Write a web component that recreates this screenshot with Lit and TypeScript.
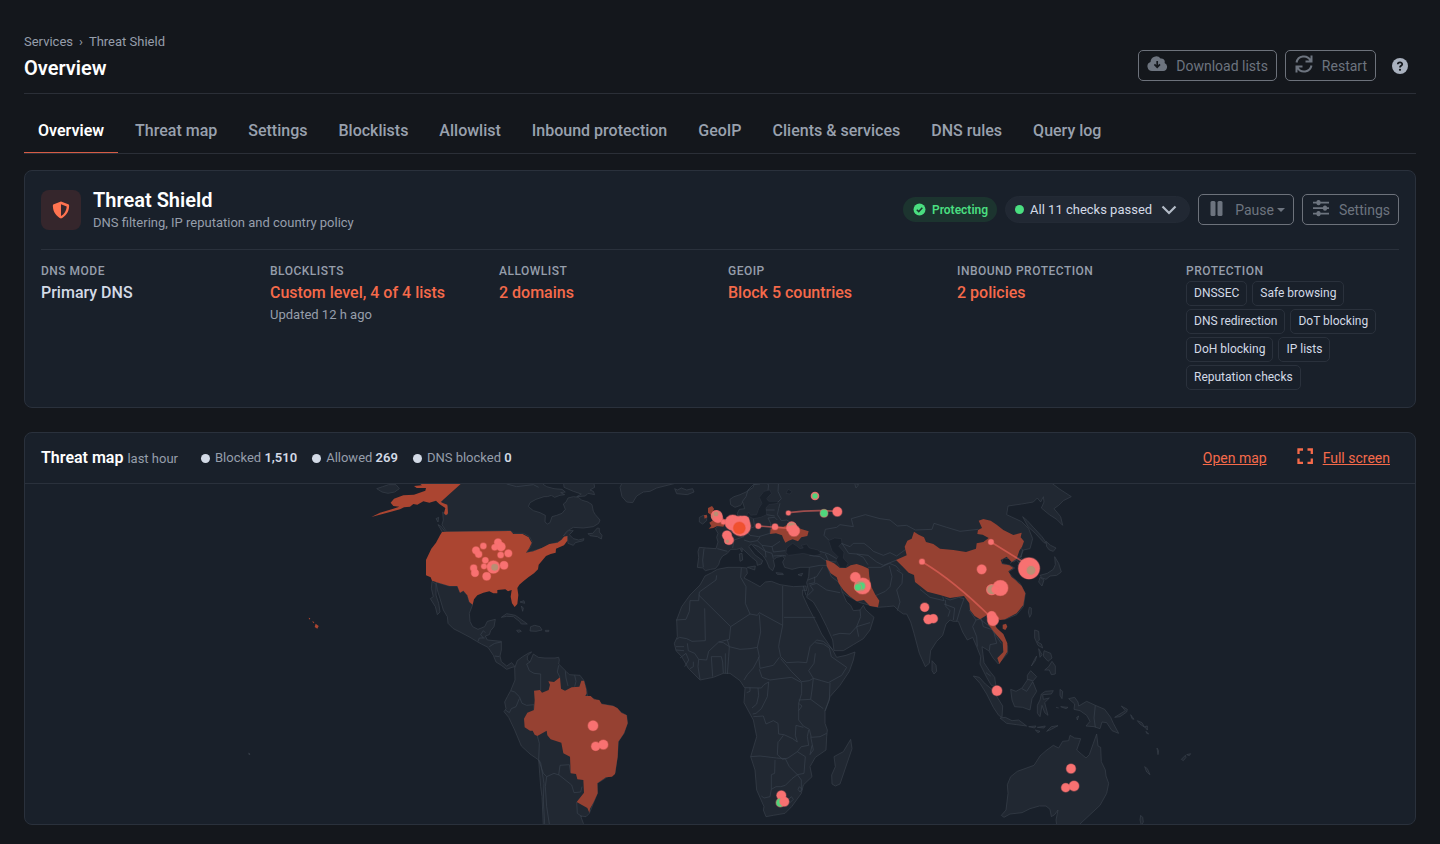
import { LitElement, html, svg, css } from "lit";
import { customElement } from "lit/decorators.js";

type Dot = [number, number, number, string?];

interface Region {
  x: number;
  y: number;
  land?: string[];
  sea?: string[];
  borders?: string[];
  hot?: string[];
  warm?: string[];
  arcs?: string[];
  dots?: Dot[];
}

const americas: Region = {
  x: 0,
  y: 0,
  land: [
    "M302,0L242,66 250,72 262,78 263,104 256,104 248,96 250,120 246,134 256,150 262,156 450,152 462,160 490,160 508,170 516,184 512,200 500,218 522,212 550,204 570,194 592,187 603,182 612,172 622,168 624,190 640,196 646,188 670,182 672,176 656,180 640,176 628,164 640,152 626,152 610,168 620,154 640,142 670,144 700,140 716,130 720,120 706,104 700,94 696,74 684,66 664,60 656,52 640,50 624,54 618,66 610,72 616,88 606,100 590,106 576,110 570,128 562,132 555,126 556,106 540,98 520,92 505,80 510,68 528,58 552,50 562,50 574,46 584,52 600,46 614,44 602,38 616,36 606,28 582,26 560,20 548,12 540,0Z",
    "M610,0L612,22 640,34 664,42 650,50 676,48 684,40 704,44 700,34 690,30 704,22 700,0Z",
    "M718,145L712,144 698,160 684,161 690,167 712,170 724,177 726,166 718,156Z",
    "M790,0L780,22 786,50 800,66 818,68 830,48 850,36 870,34 890,24 946,10 946,0Z",
    "M50,26L68,20 86,14 108,14 118,26 104,36 84,40 66,36Z",
    "M228,116L236,112 234,126Z",
    "M234,134L242,138 258,158 262,166 248,158Z",
    "M216,304L228,312 228,345 236,370 240,396 232,404 226,380 211,356 220,350 214,325Z",
    "M228,306L240,310 268,318 292,318 300,338 310,332 322,346 328,366 338,374 328,400 330,424 338,440 354,448 374,440 382,424 406,418 402,440 392,452 388,464 376,468 382,480 424,484 424,510 420,528 424,545 440,558 455,548 465,560 456,562 440,568 424,556 408,546 400,526 384,502 364,492 350,484 330,472 300,456 280,446 264,430 262,410 250,390 240,356 232,330Z",
    "M424,412L440,401 466,406 480,416 502,432 484,432 478,424 460,410 440,409Z",
    "M512,440L524,436 540,440 546,450 528,454 510,453Z",
    "M470,451L480,450 484,454 474,457Z",
    "M556,451L567,451 566,455 557,455Z",
    "M480,366L492,362 494,370Z",
    "M484,378L490,384 488,394Z",
    "M-334,819L-330,822 -332,825Z",
  ],
  borders: ["M354,484L358,474 374,474", "M376,458L370,452 362,464 370,474", "M388,500L404,490 424,486", "M404,528L418,530", "M440,12L470,20 520,14 536,22"],
  hot: [
    "M246,156L258,155 452,153 460,162 488,162 506,172 515,188 508,204 498,218 520,214 545,204 568,192 592,188 604,180 612,170 622,168 622,182 612,196 598,202 588,206 587,218 572,222 558,228 548,240 536,254 534,268 522,280 505,292 490,304 478,314 472,324 475,345 472,372 464,381 456,370 452,350 455,330 444,334 436,328 412,330 412,340 400,340 388,334 370,338 352,346 342,358 338,374 328,366 322,346 310,332 300,338 292,318 268,318 240,310 216,302 212,292 198,286 198,240 214,206 228,188 240,166Z",
    "M165,0L310,0 302,12 242,66 250,70 262,74 264,100 258,106 252,100 256,84 238,72 228,62 208,68 190,64 172,74 160,72 150,80 132,82 120,88 90,96 34,111 60,98 100,86 118,80 100,78 92,68 102,56 130,46 162,44 196,32 198,24 170,24 162,18 186,16Z",
    "M-133,431L-124,438 -128,446 -136,441Z",
    "M-144,424L-137,426 -139,430Z",
    "M-154,413L-149,415 -152,419Z",
  ],
  dots: [
    [370, 198, 9], [348, 211, 11], [356, 223, 10], [414, 187, 11], [404, 202, 9], [423, 200, 13],
    [422, 225, 9], [445, 220, 11], [376, 241, 9], [372, 259, 8], [341, 264, 10], [345, 279, 11],
    [380, 289, 12], [432, 256, 12], [400, 261, 19], [404, 262, 12, "mix"],
  ],
};

const southAmerica: Region = {
  x: 360,
  y: 480,
  land: [
    "M155,36L142,48 142,60 150,66 160,42 175,52 195,54 225,54 236,52 238,60 236,72 258,94 268,104 300,106 312,122 320,150 322,168 345,178 365,192 400,198 425,218 440,226 442,250 432,280 415,305 412,350 405,400 380,412 352,430 352,460 340,490 328,520 318,530 302,528 310,550 310,560 190,560 186,470 182,440 176,360 150,342 124,318 104,270 86,232 72,215 78,206 74,186 82,170 92,152 105,120 104,84 112,62 128,50 148,38Z",
  ],
  borders: [
    "M150,66L140,72 148,92 162,100 182,102 182,150",
    "M92,152L104,156 118,170 126,190 140,196 162,194 162,210",
    "M118,176L108,200 94,206 88,218 76,210",
    "M172,288L178,310 176,360 190,400 200,410 196,440 200,500 208,552",
    "M200,410L222,400 236,405 240,376 268,374 272,398",
    "M236,404L275,435 282,458 302,456 306,440",
    "M236,76L232,96 240,112",
    "M256,94L258,114 264,138",
    "M284,106L288,124 284,140",
    "M290,486L292,520 306,530",
    "M176,360L182,368 192,430 190,480 194,552",
  ],
  warm: [
    "M240,112L243,146 255,152 275,142 298,140 304,122 312,122 318,145 320,160 316,168 332,168 342,178 358,180 365,192 400,198 412,204 424,218 440,226 443,250 432,280 415,305 413,350 405,402 396,410 378,412 352,430 353,460 340,488 330,506 328,518 322,504 290,486 312,458 310,420 292,418 288,402 272,400 270,350 250,340 244,308 212,298 202,286 200,272 172,288 164,284 158,272 150,272 134,262 132,236 142,218 162,210 164,180 162,152 180,150 186,158 206,150 210,134 205,124 222,126Z",
  ],
  dots: [[339, 257, 15], [347, 319, 13], [370, 314, 14]],
};

const oldWorld: Region = {
  x: 840,
  y: 0,
  land: [
    "M345,0L340,22 318,36 300,44 282,50 270,58 272,74 285,82 302,76 308,66 314,86 298,88 292,100 294,110 276,114 262,118 256,130 240,134 226,146 234,160 230,172 234,186 228,206 200,204 178,202 174,215 176,232 172,262 188,264 196,272 212,268 226,266 236,254 240,240 248,228 262,220 272,208 290,208 305,204 318,216 335,232 350,244 352,256 364,252 368,242 344,224 326,200 334,192 350,210 370,228 380,244 388,264 398,272 404,258 400,240 410,232 428,228 434,236 428,246 434,262 456,268 480,262 508,262 506,290 500,308 505,330 500,352 520,366 540,400 560,440 578,480 582,512 610,512 640,494 670,476 690,450 702,412 684,396 676,388 670,376 660,390 640,392 632,376 620,366 606,335 618,345 660,368 690,376 715,382 740,380 762,378 776,392 790,402 800,402 812,426 822,460 838,520 856,560 868,550 872,512 890,484 908,466 918,432 930,420 940,424 955,424 968,456 982,480 998,472 1010,500 1022,530 1020,552 1040,592 1054,616 1068,620 1064,592 1048,572 1032,548 1026,500 1046,512 1060,535 1075,552 1103,520 1103,500 1085,465 1066,440 1072,416 1095,418 1130,404 1150,380 1156,340 1140,310 1118,292 1105,276 1124,264 1110,256 1084,250 1090,234 1110,236 1120,246 1130,240 1146,262 1152,284 1164,276 1154,246 1142,232 1150,210 1170,206 1178,176 1166,146 1145,125 1100,104 1104,78 1145,72 1180,66 1192,54 1202,66 1210,50 1212,66 1204,84 1228,104 1250,118 1268,136 1262,110 1242,86 1256,76 1270,62 1294,50 1260,28 1236,10 1230,0Z",
    "M104,26L112,30 124,24 140,30 158,26 162,36 142,44 110,41Z",
    "M178,112L190,106 200,108 200,122 188,132 178,126Z",
    "M322,262L346,258 344,270Z",
    "M298,222L306,220 308,240 300,244Z",
    "M301,208L307,206 306,216Z",
    "M408,278L428,280 430,284 412,283Z",
    "M474,284L488,280 484,288Z",
    "M232,268L264,262 300,262 320,264 322,280 312,294 335,306 360,320 376,306 394,304 420,314 460,320 498,318 500,332 488,330 488,345 504,380 530,430 545,462 556,478 578,510 590,532 618,526 645,516 640,540 628,574 600,616 570,650 555,695 555,730 562,750 560,770 558,810 526,832 510,860 516,890 490,915 484,940 455,980 435,1000 400,1006 378,1010 370,990 372,980 350,930 345,870 332,830 350,770 340,720 312,668 315,625 300,602 270,580 250,580 220,592 180,600 145,565 125,530 108,512 103,490 112,470 110,420 125,380 150,345 180,315 195,288 215,278Z",
    "M632,778L636,806 600,912 586,918 576,912 575,885 586,860 582,830 610,815Z",
  ],
  sea: [
    "M372,34L358,52 366,70 356,86 350,104 332,106 326,96 320,106 340,116 362,112 380,104 378,84 386,74 414,70 412,64 386,64 380,56 394,40 390,30Z",
    "M438,218L440,204 458,190 470,198 480,206 490,204 484,196 500,192 508,204 534,210 544,222 522,228 490,220 462,224 446,226Z",
    "M566,182L584,174 604,176 606,190 596,198 612,216 610,234 624,250 618,264 600,262 588,240 594,230 576,212Z",
    "M438,40L444,28 456,34 450,42Z",
  ],
  borders: [
    "M306,66L318,50 324,30 340,14 360,12", "M384,30L386,14 376,8", "M414,66L424,56 414,34 416,0",
    "M420,70L416,86 412,104 424,122 440,120 470,138",
    "M378,90L404,90M380,104L404,108M384,114L404,112 412,120",
    "M256,132L268,148 276,156 300,162M276,116L274,138 268,148",
    "M298,112L300,150 312,170 282,180 278,204M232,206L262,214M192,206L188,240 190,262",
    "M340,116L344,140 318,150 330,166 356,170 390,160 392,130 384,114",
    "M312,180L330,186 352,182 360,170 M352,182L366,196 396,200 420,184",
    "M340,194L356,200 376,214 378,232M366,196L376,214 396,220 400,236M396,200L400,216 436,212",
    "M438,228L428,226 400,228",
    "M508,262L540,256 560,256 574,290 600,310 606,335",
    "M508,226L540,230 560,244M540,214L566,222 590,236M556,222L566,244 588,246",
    "M548,262L530,290 504,300M506,312L524,308 524,290",
    "M504,346L520,330 510,316 530,310 560,330 600,338",
    "M578,466L600,460 630,462 650,440 690,428M650,440L662,410 660,390M650,440L656,470",
    "M566,180L552,166 556,148 590,142 600,134 640,140 634,116 676,104 720,116 750,120 772,138 800,136 826,150 876,148 882,130 920,142 960,154 1014,148",
    "M604,190L630,200 640,190 672,190 690,204 700,214 730,226 750,218 770,228 800,206",
    "M606,190L626,220 650,222 670,232 684,254",
    "M650,222L684,226 710,246 730,256 770,240",
    "M684,262L722,262 748,250 768,258 780,272",
    "M748,258L756,290 750,320 736,334 700,350M770,270L788,282 786,310 770,330 780,366 772,392",
    "M840,328L870,352 912,362 908,350M916,354L930,360 956,352 972,356",
    "M916,360L918,380 930,392 924,410M912,372L944,384 940,420M972,356L960,390 950,424",
    "M988,390L1008,420 998,440 1010,470 1012,500",
    "M1008,420L1024,416 1030,440 1060,450 1070,490 1050,494 1048,512M1020,418L1050,440 1070,470 1084,490",
    "M1110,250L1130,236 1146,228M1132,256L1146,254",
    "M1138,200L1148,210 1142,232",
    "M230,286L228,300 178,336 176,362 150,362 148,394 138,418 108,420",
    "M176,345L272,440 330,402 316,370 318,320 302,292 304,264",
    "M194,385L196,482 156,484 140,476 118,472 110,478",
    "M330,402L352,406 358,398 428,436 428,318",
    "M432,412L526,412M490,318L498,346",
    "M428,436L418,486 416,500 422,530 440,548 474,546 500,548 510,500 530,480 550,484 578,508",
    "M272,440L268,478 236,486 206,514 200,540 176,538 164,520 145,512 142,490",
    "M358,404L362,456 352,502 330,506 300,508 268,500 262,480",
    "M268,500L266,530 262,582M352,502L358,530 340,564 322,584 312,600",
    "M356,530L360,565 400,556 418,532M268,500L250,488 236,486",
    "M214,530L244,530 248,546 250,580M214,530L218,590M256,520L256,580",
    "M108,500L132,500M108,510L132,512M120,534L138,520 146,540 134,560M176,538L174,560 180,598M150,566L160,560 160,545",
  ],
  warm: [
    "M558,240L566,242 582,250 600,264 618,264 632,256 650,252 668,258 686,266 688,290 694,320 706,344 718,362 714,382 690,378 672,360 650,364 628,348 610,330 596,310 590,292 572,280 560,258Z",
    "M390,162L392,148 402,138 430,140 448,132 470,142 486,148 506,154 502,168 484,172 474,184 458,178 446,182 436,188 430,176 426,166 408,160Z",
    "M204,84L216,78 222,86 220,94 234,102 242,124 256,130 250,140 232,138 220,144 206,146 214,138 208,128 220,120 214,106 204,98Z",
    "M192,106L200,104 202,112 194,116Z",
  ],
  arcs: ["M445,98Q520,88 592,94", "M355,138L460,146", "M230,110Q260,120 290,138"],
  dots: [
    [525, 48, 11, "mix"], [525, 48, 9, "ok"], [445, 99, 7], [552, 100, 12, "ok"], [592, 95, 14],
    [230, 108, 16, "mix"], [234, 114, 14], [250, 126, 7], [228, 102, 9, "mix"],
    [278, 128, 23], [302, 138, 30], [314, 122, 14], [298, 144, 18, "core"],
    [261, 166, 14], [267, 180, 14], [262, 184, 7, "mix"],
    [355, 138, 8], [405, 140, 9], [455, 140, 14, "mix"], [462, 152, 17], [448, 146, 8],
  ],
};

const southernAfrica: Region = {
  x: 900,
  y: 480,
  borders: [
    "M466,8L490,12 508,24 514,50 560,82 545,106 505,128 484,122 460,115 446,92 462,70 466,40",
    "M362,56L374,70 394,94 425,125 448,122 460,115",
    "M298,88L306,112 330,120 360,116 395,112 425,128 425,160 416,190 416,240 430,258 448,268 454,292 480,290 500,280",
    "M255,143L304,144 312,134 326,126 322,170 304,206 288,220 278,222",
    "M260,158L270,154 270,142M294,144L296,166 290,192 276,204",
    "M280,230L310,228 318,252 340,242 354,250 356,282 372,284 398,296 412,306 406,286 408,256 430,262",
    "M356,305L370,286M354,305L352,344 368,358 384,354 412,335 424,320 446,316 442,290 446,270",
    "M272,350L300,348 350,354 376,356 388,380 412,404 396,416 376,436 362,440 348,440 334,448 330,470 312,474 304,468",
    "M345,360L344,400 334,404 334,448",
    "M412,404L432,400 436,350 412,335M452,290L460,330 450,344 456,316",
    "M412,404L424,420 424,452M418,440L426,448 420,456 414,448Z",
    "M384,480L394,470 400,478 390,488Z",
    "M510,128L508,180 494,214M460,115L456,150 452,178 490,206M416,180L452,178M416,190L426,198 416,212",
  ],
  dots: [[364, 466, 14], [361, 488, 13, "ok"], [373, 485, 14]],
};

const eastAsia: Region = {
  x: 1440,
  y: 0,
  land: [
    "M548,110L562,122 580,142 606,170 620,190 612,188 586,160 564,140Z",
    "M618,184L632,196 648,204 640,214 628,210 620,200Z",
    "M644,230L656,250 664,276 650,286 630,288 618,298 606,294 600,286 622,280 640,268 646,254Z",
    "M600,292L612,300 606,318 596,306Z",
    "M568,382L574,384 574,402 569,412 565,396Z",
    "M276,542L288,556 290,574 282,582 276,572Z",
    "M44,10L56,14 48,24Z",
  ],
  warm: [
    "M222,155L236,164 252,172 258,186 280,192 300,206 340,210 378,216 408,206 410,190 430,186 446,174 428,164 412,162 414,150 426,144 416,122 430,117 452,122 470,134 490,150 520,165 545,158 542,172 552,184 546,200 538,212 530,236 515,246 500,230 482,240 486,252 508,256 520,264 505,274 514,290 526,300 545,318 556,340 550,375 530,400 495,418 480,420 462,408 446,402 430,412 420,418 404,408 390,390 388,370 372,348 345,352 330,354 300,345 262,335 245,322 225,306 222,285 206,278 190,262 168,240 200,226 194,200 202,182 215,176Z",
    "M446,412L456,420 470,444 490,462 502,490 502,515 490,534 478,552 472,534 490,516 488,486 462,456 444,432Z",
    "M488,434L498,431 502,440 496,450 488,446Z",
  ],
  arcs: ["M246,245Q340,300 455,414", "M453,186L560,252"],
  dots: [
    [246, 245, 8], [453, 186, 8], [425, 268, 14], [481, 324, 23], [455, 329, 15, "mix"], [466, 328, 11],
    [567, 265, 32], [573, 271, 15, "mix"], [254, 382, 13], [265, 418, 14], [280, 416, 13],
    [455, 408, 14], [459, 420, 17], [46, 292, 15], [68, 318, 24], [62, 318, 18, "mix"], [64, 318, 12, "ok"], [54, 322, 11, "ok"],
  ],
};

const oceania: Region = {
  x: 1740,
  y: 420,
  land: [
    "M100,168L118,172 136,192 156,208 172,232 188,258 186,292 176,286 160,262 140,222 120,190Z",
    "M180,294L196,292 216,302 236,300 260,318 230,314 200,310Z",
    "M212,208L228,214 246,204 262,180 262,166 272,152 290,170 278,184 290,214 276,236 270,270 248,262 224,260 216,240Z",
    "M304,222L316,214 340,212 334,222 308,224 310,238 328,234 314,248 324,286 314,278 306,256 300,290 292,280 292,256 300,240Z",
    "M360,208L368,214 366,236 360,226Z",
    "M348,262L356,264M362,260L384,262 378,266Z",
    "M266,320L288,318 284,324ZM292,322L316,318 312,324ZM286,330L300,334 294,338Z",
    "M320,334L334,320 354,317 334,328Z",
    "M386,236L404,232 414,246 416,258 440,244 466,256 494,268 512,292 520,310 536,340 516,332 500,308 486,306 480,326 462,320 438,318 450,304 440,286 420,272 402,268 404,252Z",
    "M524,292L540,290 560,276 562,268 544,258 556,272 540,282Z",
    "M572,284L582,298 576,296ZM592,302L606,308 614,322 600,312Z",
    "M614,320L622,318 622,330ZM618,334L626,342 620,340Z",
    "M284,30L296,34 298,60 292,66 304,72 308,84 294,76 284,54Z",
    "M312,92L332,100 336,114 324,124 310,108ZM296,86L306,104 300,112Z",
    "M326,140L336,124 346,138 346,162 334,164 328,150 314,150Z",
    "M290,108L286,122 274,138 284,118Z",
    "M410,292L416,288 412,300Z",
    "M390,346L404,354 422,356 418,368 410,390 424,402 438,414 448,404 460,370 470,342 474,378 482,382 484,425 496,450 498,468 506,490 500,520 480,556 450,584 420,612 420,630 352,630 348,600 354,570 344,584 334,590 330,568 318,558 298,558 270,566 246,578 210,582 192,592 184,586 198,570 204,520 202,494 212,470 232,454 282,436 300,408 318,392 340,376 356,384 368,364 386,362Z",
    "M614,440L622,446 630,464 620,456ZM651,384L656,392 654,404Z",
    "M724,418L736,406 738,412 730,422ZM740,404L752,401 748,407Z",
    "M602,586L608,592 610,606 604,616 600,600Z",
  ],
  borders: ["M466,256L462,294 466,322", "M246,206L260,214 278,186M262,178L278,182", "M138,158L152,168"],
  dots: [[171, 212, 15], [393, 446, 14], [377, 503, 13], [402, 498, 15]],
};

const regions = [americas, southAmerica, oldWorld, southernAfrica, eastAsia, oceania];

const tabs = ["Overview", "Threat map", "Settings", "Blocklists", "Allowlist", "Inbound protection", "GeoIP", "Clients & services", "DNS rules", "Query log"];

const features = ["DNSSEC", "Safe browsing", "DNS redirection", "DoT blocking", "DoH blocking", "IP lists", "Reputation checks"];

const links: [string, string, string?][] = [
  ["Blocklists", "Custom level, 4 of 4 lists", "Updated 12 h ago"],
  ["Allowlist", "2 domains"],
  ["GeoIP", "Block 5 countries"],
  ["Inbound protection", "2 policies"],
];

const totals: [string, string][] = [["Blocked", "1,510"], ["Allowed", "269"], ["DNS blocked", "0"]];

@customElement("threat-world-map")
export class ThreatWorldMap extends LitElement {
  static styles = css`
    :host { display: block; }
    .map { display: block; width: 100%; height: 100%; }
    .land { fill: #212832; stroke: #39414c; stroke-width: 2; stroke-linejoin: round; }
    .sea { fill: #19202a; stroke: #39414c; stroke-width: 1; }
    .border { fill: none; stroke: #3a434e; stroke-width: 2; }
    .hot { fill: #ab4531; }
    .warm { fill: #964132; }
    .arc { fill: none; stroke: #f0655f; stroke-width: 5; opacity: 0.6; }
    .dot { fill: #f87171; stroke: #f87171; stroke-opacity: 0.4; stroke-width: 4; }
    .dot.ok { fill: #4fd67c; }
    .dot.mix { fill: #b98f74; stroke-opacity: 0.8; }
    .dot.core { fill: #f0512f; stroke: #f0512f; }
  `;

  private shapes(list: string[] | undefined, kind: string) {
    return (list ?? []).map((d) => svg`<path class=${kind} d=${d}></path>`);
  }

  private layer(draw: (r: Region) => unknown) {
    return regions.map((r) => svg`<g transform="translate(${r.x} ${r.y})">${draw(r)}</g>`);
  }

  render() {
    return html`
      <svg class="map" viewBox="-1005 12 4170 1020" preserveAspectRatio="xMidYMid slice" role="img" aria-label="World map of threats">
        ${this.layer((r) => this.shapes(r.land, "land"))}
        ${this.layer((r) => [this.shapes(r.sea, "sea"), this.shapes(r.borders, "border")])}
        ${this.layer((r) => [this.shapes(r.hot, "hot"), this.shapes(r.warm, "warm")])}
        ${this.layer((r) => this.shapes(r.arcs, "arc"))}
        ${this.layer((r) => (r.dots ?? []).map(([x, y, size, kind]) => svg`<circle class="dot ${kind ?? ""}" cx=${x} cy=${y} r=${size}></circle>`))}
      </svg>
    `;
  }
}

@customElement("app-root")
export class AppRoot extends LitElement {
  static styles = css`
    :host {
      display: block;
      box-sizing: border-box;
      min-height: 100vh;
      padding: 32px 24px 19px;
      background: #14171c;
      color: #d3dae6;
      font-family: Roboto, "Liberation Sans", sans-serif;
      font-size: 13px;
      line-height: 20px;
    }
    * { box-sizing: border-box; }
    h1, h2, p, dl, dd, ul { margin: 0; padding: 0; }
    ul { list-style: none; }
    a { color: inherit; text-decoration: none; }
    svg { display: block; flex: none; }

    .page-head { display: flex; justify-content: space-between; align-items: flex-end; border-bottom: 1px solid #2b2f37; padding-bottom: 12px; }
    .crumbs { display: flex; gap: 6px; color: #969eab; }
    .title { font-size: 20px; line-height: 25px; font-weight: 600; color: #fff; margin-top: 4px; }
    .actions { display: flex; align-items: center; gap: 8px; }
    .page-actions { padding-right: 8px; }
    .btn {
      display: flex; align-items: center; height: 31px; padding: 0 8px; gap: 8px;
      border: 1px solid #6d727b; border-radius: 5px; background: transparent;
      color: #6d747f; font: inherit; font-size: 14px;
    }
    .btn svg { margin-bottom: 4px; }
    .help { border: 0; padding: 0; margin-left: 8px; background: none; color: #a9b1be; }

    .tabs { display: flex; gap: 3px; margin-top: 16px; border-bottom: 1px solid #2b2f37; }
    .tab { padding: 10px 14px; border-bottom: 1px solid transparent; font-size: 16px; line-height: 22px; font-weight: 500; color: #99a1ae; }
    .tab.current { color: #fff; font-weight: 600; border-bottom-color: #d65c45; }

    .card { border: 1px solid #2a313c; border-radius: 8px; background: #19202a; }
    .status { margin-top: 16px; padding: 16px 16px 17px; }
    .status-head { display: flex; align-items: center; gap: 12px; padding-bottom: 16px; border-bottom: 1px solid #2a313c; }
    .shield { display: grid; place-items: center; width: 40px; height: 40px; border-radius: 8px; background: #35262c; color: #ff7350; }
    .name { font-size: 20px; line-height: 26px; font-weight: 600; color: #fff; }
    .muted { color: #969eab; }
    .status-head .actions { margin-left: auto; padding-bottom: 1px; }
    .pill { display: flex; align-items: center; gap: 6px; height: 25px; padding: 0 9px 0 10px; border-radius: 13px; background: #1c342f; color: #4ade80; font-size: 12px; font-weight: 600; }
    .checks { display: flex; align-items: center; gap: 6px; height: 27px; padding: 0 12px 0 9px; border: 1px solid #232a35; border-radius: 14px; background: #212833; color: #d3dae6; font: inherit; }
    .checks svg { margin-left: 3px; color: #b3bbc7; }
    .dot { width: 9px; height: 9px; border-radius: 50%; background: #d3dae6; }
    .dot.ok { background: #4ade80; }
    .caret { margin-left: -5px; border: 4px solid transparent; border-top-color: currentColor; border-bottom: 0; }

    .facts { display: grid; grid-template-columns: repeat(6, minmax(0, 1fr)); gap: 16px; padding-top: 12px; }
    .label { font-size: 12px; line-height: 19px; font-weight: 500; letter-spacing: 0.5px; text-transform: uppercase; color: #969eab; }
    .value { font-size: 16px; line-height: 24px; font-weight: 500; color: #d3dae6; }
    .value a { color: #f56a4a; }
    .chips { display: flex; flex-wrap: wrap; gap: 3px 5px; }
    .chip { padding: 2px 7px; border: 1px solid #2a313c; border-radius: 5px; font-size: 12px; line-height: 19px; }

    .map-card { margin-top: 24px; overflow: hidden; }
    .map-head { display: flex; align-items: center; height: 51px; padding: 0 25px 0 16px; border-bottom: 1px solid #2a313c; }
    .map-title { font-size: 16px; font-weight: 600; color: #fff; }
    .map-title span { font-size: 13px; font-weight: 400; color: #969eab; }
    .totals { display: flex; gap: 15px; margin-left: 23px; }
    .total { display: flex; align-items: center; gap: 5px; color: #969eab; }
    .total strong { color: #d3dae6; font-weight: 600; }
    .map-links { display: flex; gap: 30px; margin-left: auto; font-size: 14px; color: #f56a4a; }
    .map-links a { display: flex; gap: 10px; }
    .map-links span { text-decoration: underline; }
    .world { aspect-ratio: 1390 / 340; }

    @media (max-width: 1000px) {
      .tabs, .status-head, .map-head { flex-wrap: wrap; height: auto; }
      .facts { grid-template-columns: repeat(2, minmax(0, 1fr)); }
    }
  `;

  render() {
    return html`
      <header class="page-head">
        <div>
          <nav class="crumbs" aria-label="Breadcrumb"><a href="#services">Services</a><span>›</span><span>Threat Shield</span></nav>
          <h1 class="title">Overview</h1>
        </div>
        <div class="actions page-actions">
          <button class="btn">
            <svg width="21" height="18" viewBox="0 0 21 18"><path fill="currentColor" d="M5 16a4.700 4.700 0 0 1-1.500-9.100A5.700 5.700 0 0 1 13.600 3.500 3.500 3.500 0 0 1 17.600 8 4.200 4.200 0 0 1 16.300 16Z"/><path d="M10.200 6v6M7.400 9.400l2.800 2.800L13 9.400" fill="none" stroke="#14171c" stroke-width="1.700"/></svg>
            Download lists
          </button>
          <button class="btn">
            <svg width="20" height="20" viewBox="0 0 20 20" fill="none" stroke="currentColor" stroke-width="2"><path d="M2.500 8.500A7.500 7.500 0 0 1 16.500 6.500M17.500 1.500V7.500H11.500M17.500 11.500A7.500 7.500 0 0 1 3.500 13.500M2.500 18.500V12.500H8.500"/></svg>
            Restart
          </button>
          <button class="help" aria-label="Help">
            <svg width="16" height="16" viewBox="0 0 16 16"><circle cx="8" cy="8" r="8" fill="currentColor"/><path d="M5.800 6.300C5.800 3.600 10.300 3.700 10.200 6.300 10.100 7.800 8 7.900 8 9.400" fill="none" stroke="#14171c" stroke-width="1.800"/><circle cx="8" cy="11.800" r="1.100" fill="#14171c"/></svg>
          </button>
        </div>
      </header>

      <nav class="tabs" aria-label="Sections">
        ${tabs.map((t, i) => html`<a class="tab ${i === 0 ? "current" : ""}" href="#">${t}</a>`)}
      </nav>

      <section class="card status">
        <div class="status-head">
          <div class="shield">
            <svg width="18" height="18" viewBox="0 0 18 18"><path fill="currentColor" fill-rule="evenodd" d="M9 .5 16.200 3.300C17.200 3.700 17.200 4.500 17.100 5.500 16.900 11 13.500 15.500 9 17.500 4.500 15.500 1.100 11 .9 5.500.8 4.500.8 3.700 1.800 3.300ZM9 3.200V14.900C12.300 13.200 14.500 9.500 14.700 5.400Z"/></svg>
          </div>
          <div>
            <h2 class="name">Threat Shield</h2>
            <p class="muted">DNS filtering, IP reputation and country policy</p>
          </div>
          <div class="actions">
            <span class="pill">
              <svg width="13" height="13" viewBox="0 0 12 12"><circle cx="6" cy="6" r="5.500" fill="currentColor"/><path d="M3.500 6.200l1.800 1.700L8.600 4.300" fill="none" stroke="#1c342f" stroke-width="1.400"/></svg>
              Protecting
            </span>
            <button class="checks">
              <span class="dot ok"></span>All 11 checks passed
              <svg width="16" height="10" viewBox="0 0 16 10"><path d="M1.500 1.500 8 8l6.500-6.500" fill="none" stroke="currentColor" stroke-width="2.200"/></svg>
            </button>
            <button class="btn">
              <svg width="20" height="18" viewBox="0 0 20 18" fill="currentColor"><rect x="3.500" y="2" width="5" height="15" rx="1.500"/><rect x="10.500" y="2" width="5" height="15" rx="1.500"/></svg>
              Pause <span class="caret"></span>
            </button>
            <button class="btn">
              <svg width="20" height="18" viewBox="0 0 20 18" fill="currentColor"><path d="M2 2.800h16v1.600H2ZM2 8.300h16v1.600H2ZM2 13.800h16v1.600H2Z"/><rect x="5.500" y="1" width="4" height="5.200" rx="1.800"/><rect x="12" y="6.500" width="4" height="5.200" rx="1.800"/><rect x="5.500" y="12" width="4" height="5.200" rx="1.800"/></svg>
              Settings
            </button>
          </div>
        </div>
        <dl class="facts">
          <div><dt class="label">DNS mode</dt><dd class="value">Primary DNS</dd></div>
          ${links.map(([label, value, note]) => html`
            <div>
              <dt class="label">${label}</dt>
              <dd class="value"><a href="#">${value}</a></dd>
              ${note ? html`<dd class="muted">${note}</dd>` : ""}
            </div>`)}
          <div>
            <dt class="label">Protection</dt>
            <dd><ul class="chips">${features.map((f) => html`<li class="chip">${f}</li>`)}</ul></dd>
          </div>
        </dl>
      </section>

      <section class="card map-card">
        <div class="map-head">
          <h2 class="map-title">Threat map <span>last hour</span></h2>
          <ul class="totals">
            ${totals.map(([name, count]) => html`<li class="total"><span class="dot"></span><span>${name} <strong>${count}</strong></span></li>`)}
          </ul>
          <div class="map-links">
            <a href="#"><span>Open map</span></a>
            <a href="#"><svg width="16" height="16" viewBox="0 0 16 16" fill="none" stroke="currentColor" stroke-width="2.300"><path d="M1.500 6V1.500H6M10.500 1.500H14.800V6M14.800 10.500V14.800H10.500M6 14.800H1.500V10.500"/></svg><span>Full screen</span></a>
          </div>
        </div>
        <threat-world-map class="world"></threat-world-map>
      </section>
    `;
  }
}
